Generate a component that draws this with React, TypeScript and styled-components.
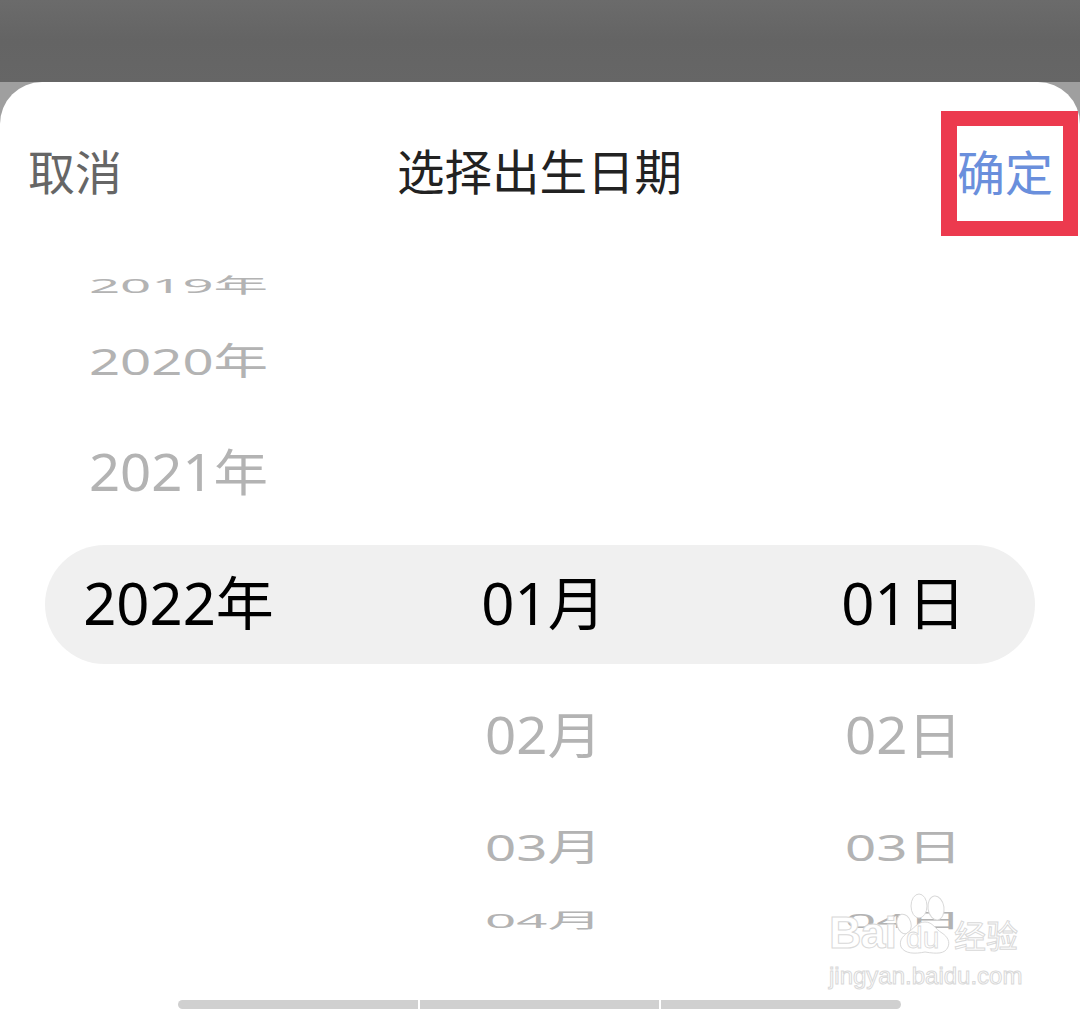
import React from "react";
import styled, { createGlobalStyle } from "styled-components";

const GlobalStyle = createGlobalStyle`
  html, body {
    margin: 0;
    padding: 0;
    background: #9f9f9f;
  }
  body {
    font-family: "Noto Sans", "Noto Sans CJK SC", sans-serif;
  }
`;

const Page = styled.div`
  position: relative;
  width: 1080px;
  height: 1009px;
  overflow: hidden;
  background: #9f9f9f;
`;

const StatusBar = styled.div`
  height: 82px;
  background: linear-gradient(180deg, #6b6b6b 0%, #646464 50%, #666666 100%);
`;

const Sheet = styled.div`
  height: 927px;
  background: #ffffff;
  border-radius: 42px 42px 0 0;
`;

const Header = styled.header`
  display: flex;
  justify-content: space-between;
  align-items: center;
  height: 155px;
  padding: 10px 27px 0 28px;
  font-family: "Noto Sans CJK SC", sans-serif;
`;

const Cancel = styled.span`
  font-size: 47px;
  color: #666666;
`;

const Title = styled.h1`
  margin: 0;
  font-size: 47.5px;
  font-weight: 400;
  color: #222222;
`;

const Confirm = styled.span`
  font-size: 48px;
  color: #6a8fdc;
`;

const Wheel = styled.div`
  display: flex;
  flex-direction: column;
`;

const Row = styled.div<{ $height: number; $active?: boolean }>`
  display: grid;
  grid-template-columns: 270px 1fr 263px;
  align-items: center;
  height: ${(p) => p.$height}px;
  margin: 0 45px;
  border-radius: 60px;
  background: ${(p) => (p.$active ? "#f0f0f0" : "transparent")};
`;

const Cell = styled.div<{ $squash: number; $active?: boolean }>`
  padding-bottom: ${(p) => (p.$active ? 3 : 0)}px;
  text-align: center;
  line-height: 1;
  white-space: nowrap;
  font-size: ${(p) => (p.$active ? 58 : 54.5)}px;
  color: ${(p) => (p.$active ? "#000000" : "#b3b3b3")};
  transform: scaleY(${(p) => p.$squash});
  &:first-child {
    padding-right: 3px;
  }
`;

const ScrollBar = styled.div`
  display: flex;
  gap: 2px;
  width: 723px;
  height: 9px;
  margin: 47px 0 0 178px;
  border-radius: 5px;
  overflow: hidden;
`;

const ScrollPart = styled.div`
  flex: 1;
  background: #d0d0d0;
`;

const Highlight = styled.div`
  position: absolute;
  left: 941px;
  top: 111px;
  width: 137px;
  height: 125px;
  box-sizing: border-box;
  border: 15px solid #ec3a4e;
  border-left-width: 16px;
`;

const Watermark = styled.div`
  position: absolute;
  left: 829px;
  top: 892px;
  width: 196px;
  color: #ffffff;
  -webkit-text-stroke: 1px #d9d9d9;
`;

const Brand = styled.div`
  display: flex;
  align-items: flex-end;
  height: 64px;
  font-family: "Liberation Sans", sans-serif;
  font-size: 45px;
  font-weight: 700;
  line-height: 46px;
  letter-spacing: -1px;
`;

const PawBox = styled.div`
  position: relative;
  flex: none;
  width: 60px;
  height: 64px;
  margin: 0 -1px 0 -1px;
`;

const PawText = styled.span`
  position: absolute;
  left: 11px;
  bottom: 3px;
  font-size: 30px;
  font-weight: 400;
  line-height: 30px;
  letter-spacing: 0;
  -webkit-text-stroke: 0.8px #d9d9d9;
`;

const Cjk = styled.span`
  font-family: "Noto Sans CJK SC", sans-serif;
  font-size: 32px;
  font-weight: 400;
  line-height: 44px;
  letter-spacing: 0;
`;

const Domain = styled.div`
  margin-top: 7px;
  font-family: "Liberation Sans", sans-serif;
  font-size: 24px;
  line-height: 26px;
  white-space: nowrap;
`;

const rows = [
  { height: 76, squash: 0.38, cells: ["2019年", "", ""] },
  { height: 76, squash: 0.68, cells: ["2020年", "", ""] },
  { height: 146, squash: 0.92, cells: ["2021年", "", ""] },
  { height: 119, squash: 1, cells: ["2022年", "01月", "01日"], active: true },
  { height: 143, squash: 0.92, cells: ["", "02月", "02日"] },
  { height: 80, squash: 0.68, cells: ["", "03月", "03日"] },
  { height: 66, squash: 0.38, cells: ["", "04月", "04日"] },
];

export default function App() {
  return (
    <Page>
      <GlobalStyle />
      <StatusBar />
      <Sheet>
        <Header>
          <Cancel>取消</Cancel>
          <Title>选择出生日期</Title>
          <Confirm>确定</Confirm>
        </Header>
        <Wheel>
          {rows.map((row) => (
            <Row key={row.height + row.cells.join()} $height={row.height} $active={row.active}>
              {row.cells.map((text, i) => (
                <Cell key={i} $squash={row.squash} $active={row.active}>
                  {text}
                </Cell>
              ))}
            </Row>
          ))}
        </Wheel>
        <ScrollBar>
          <ScrollPart />
          <ScrollPart />
          <ScrollPart />
        </ScrollBar>
      </Sheet>
      <Highlight />
      <Watermark>
        <Brand>
          <span>Bai</span>
          <PawBox>
            <svg width="60" height="64" viewBox="0 0 60 64" fill="#ffffff" stroke="#d9d9d9" strokeWidth="1">
              <ellipse cx="9" cy="32" rx="7" ry="10" transform="rotate(-15 9 32)" />
              <ellipse cx="24" cy="14" rx="8" ry="12" />
              <ellipse cx="41" cy="16" rx="8" ry="12" transform="rotate(-8 41 16)" />
              <path d="M30 30c8 0 10 7 17 11 6 4 8 9 6 14-3 7-11 7-23 5-10 2-20 2-24-5-2-6 1-10 6-14 7-4 10-11 18-11z" />
            </svg>
            <PawText>du</PawText>
          </PawBox>
          <Cjk>经验</Cjk>
        </Brand>
        <Domain>jingyan.baidu.com</Domain>
      </Watermark>
    </Page>
  );
}
